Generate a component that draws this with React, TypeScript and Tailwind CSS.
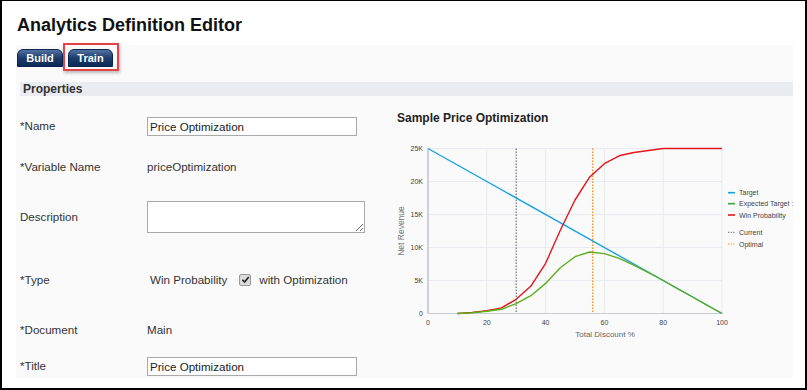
import React from 'react';

const xs = [10, 15, 20, 25, 30, 35, 40, 45, 50, 55, 60, 65, 70, 75, 80, 85, 90, 95, 100];
const win = [0, 150, 420, 850, 2150, 4150, 7600, 12600, 17200, 20700, 22700, 23900, 24400, 24700, 25000, 25000, 25000, 25000, 25000];

const X = (d: number) => 38 + d * 2.94;
const Y = (v: number) => 188.5 - (v * 165) / 25000;

function pts(vals: number[]) {
  return xs.map((d, i) => `${X(d).toFixed(1)},${Y(vals[i]).toFixed(1)}`).join(' ');
}

function Chart() {
  const expected = win.map((v, i) => v * (1 - xs[i] / 100));
  return (
    <svg width="403" height="225" className="block">
      {[0, 5000, 10000, 15000, 20000, 25000].map(v => (
        <g key={v}>
          <line x1={38} x2={332} y1={Y(v)} y2={Y(v)} stroke="#e7eaf0" strokeWidth="1" />
          <text x={33} y={Y(v) + 2.5} fontSize="7" fill="#444" textAnchor="end">
            {v === 0 ? '0' : `${v / 1000}K`}
          </text>
        </g>
      ))}
      {[0, 20, 40, 60, 80, 100].map(d => (
        <g key={d}>
          {d > 0 && <line x1={X(d)} x2={X(d)} y1={Y(25000)} y2={Y(0)} stroke="#e7eaf0" strokeWidth="1" />}
          <text x={X(d)} y={200} fontSize="7" fill="#444" textAnchor="middle">
            {d}
          </text>
        </g>
      ))}
      <line x1={38} x2={38} y1={Y(25000)} y2={Y(0)} stroke="#bfc3c9" strokeWidth="1.5" />
      <line x1={38} x2={332} y1={Y(0)} y2={Y(0)} stroke="#c9ccd2" strokeWidth="1" />

      <text x={215} y={212} fontSize="8" fill="#666" textAnchor="middle">
        Total Discount %
      </text>
      <text x={14} y={106} fontSize="8.5" fill="#777" textAnchor="middle" transform="rotate(-90 14 106)">
        Net Revenue
      </text>

      <line x1={X(30)} x2={X(30)} y1={Y(25000)} y2={Y(0)} stroke="#555" strokeWidth="1" strokeDasharray="1.5 1.5" />
      <line x1={X(56)} x2={X(56)} y1={Y(25000)} y2={Y(0)} stroke="#f7941d" strokeWidth="1.3" strokeDasharray="1.5 1.5" />

      <line x1={X(0)} y1={Y(25000)} x2={X(100)} y2={Y(0)} stroke="#1ba1e2" strokeWidth="1.4" />
      <polyline points={pts(win)} fill="none" stroke="#e3161c" strokeWidth="1.4" strokeLinejoin="round" />
      <polyline points={pts(expected)} fill="none" stroke="#5eae1e" strokeWidth="1.4" strokeLinejoin="round" />

      <g fontSize="7" fill="#444">
        <line x1={338} x2={345} y1={67.7} y2={67.7} stroke="#1ba1e2" strokeWidth="1.6" />
        <text x={349} y={70.2}>Target</text>
        <line x1={338} x2={345} y1={78.7} y2={78.7} stroke="#3aa53a" strokeWidth="1.6" />
        <text x={349} y={81.2}>Expected Target :</text>
        <line x1={338} x2={345} y1={90} y2={90} stroke="#e3161c" strokeWidth="1.6" />
        <text x={349} y={92.5}>Win Probability</text>
        <line x1={338} x2={345} y1={107.3} y2={107.3} stroke="#666" strokeWidth="1" strokeDasharray="1.3 1.3" />
        <text x={349} y={109.8}>Current</text>
        <line x1={338} x2={345} y1={119} y2={119} stroke="#f7941d" strokeWidth="1.2" strokeDasharray="1.3 1.3" />
        <text x={349} y={121.5}>Optimal</text>
      </g>
    </svg>
  );
}

function Row({ label, h, children }: { label: string; h: string; children?: React.ReactNode }) {
  return (
    <div className={`flex items-center ${h}`}>
      <div className="w-[127px] shrink-0">{label}</div>
      <div className="flex items-center">{children}</div>
    </div>
  );
}

export default function App() {
  return (
    <div className="w-[807px] h-[390px] overflow-hidden border-x-2 border-b-2 border-t border-black bg-white font-['Liberation_Sans',Arial,sans-serif] text-[#333]">
      <h1 className="ml-[15px] mt-[13px] text-[18px] leading-[22px] font-bold text-[#111]">
        Analytics Definition Editor
      </h1>

      <div className="ml-[14px] mt-[9px] w-[777px] h-[333px] bg-[#fafafb] pt-[4px]">
        <div className="flex gap-[5px] pl-[1px]">
          <div className="w-[46px] h-[18px] rounded-t-[6px] border border-[#0b2550] bg-gradient-to-b from-[#5273a3] via-[#1d3d6c] to-[#0c2a56] text-white text-[11px] font-bold leading-[16px] text-center">
            Build
          </div>
          <div className="relative w-[45px] h-[18px] rounded-t-[6px] border border-[#0b2550] bg-gradient-to-b from-[#5273a3] via-[#1d3d6c] to-[#0c2a56] text-white text-[11px] font-bold leading-[16px] text-center">
            Train
            <div className="absolute left-[-6px] top-[-7px] w-[56px] h-[28px] border-2 border-[#e4434b] shadow-[1px_2px_3px_rgba(0,0,0,0.25)]" />
          </div>
        </div>

        <div className="ml-[4px] mt-[15px] h-[14px] bg-[#e9ecf1] pl-[3px] text-[12px] leading-[14px] font-bold text-[#333]">
          Properties
        </div>

        <div className="flex">
          <div className="w-[374px] shrink-0 pl-[4px] pt-[10px] text-[11.6px]">
            <Row label="*Name" h="h-[40px]">
              <input
                readOnly
                value="Price Optimization"
                className="w-[210px] h-[19px] border border-[#a9a9a9] bg-white pl-[2px] text-[11.6px] text-[#222] outline-none"
              />
            </Row>
            <Row label="*Variable Name" h="h-[42px]">
              <span>priceOptimization</span>
            </Row>
            <Row label="Description" h="h-[58px]">
              <textarea
                readOnly
                className="block w-[218px] h-[32px] border border-[#a9a9a9] bg-white outline-none"
              />
            </Row>
            <Row label="*Type" h="h-[68px]">
              <span className="ml-[3px]">Win Probability</span>
              <span className="ml-[12px] flex w-[12px] h-[12px] items-center justify-center rounded-[2px] border border-[#9a9a9a] bg-[#dcdcdc]">
                <svg width="9" height="9" viewBox="0 0 10 10">
                  <path d="M1.5 5.3 L4 7.8 L8.6 2.2" fill="none" stroke="#222" strokeWidth="1.8" />
                </svg>
              </span>
              <span className="ml-[8px]">with Optimization</span>
            </Row>
            <Row label="*Document" h="h-[32px]">
              <span>Main</span>
            </Row>
            <Row label="*Title" h="h-[40px]">
              <input
                readOnly
                value="Price Optimization"
                className="w-[210px] h-[19px] border border-[#a9a9a9] bg-white pl-[2px] text-[11.6px] text-[#222] outline-none"
              />
            </Row>
          </div>

          <div className="flex-1 pt-[15px]">
            <div className="pl-[7px] text-[12px] leading-[14px] font-bold text-[#222]">Sample Price Optimization</div>
            <Chart />
          </div>
        </div>
      </div>
    </div>
  );
}
